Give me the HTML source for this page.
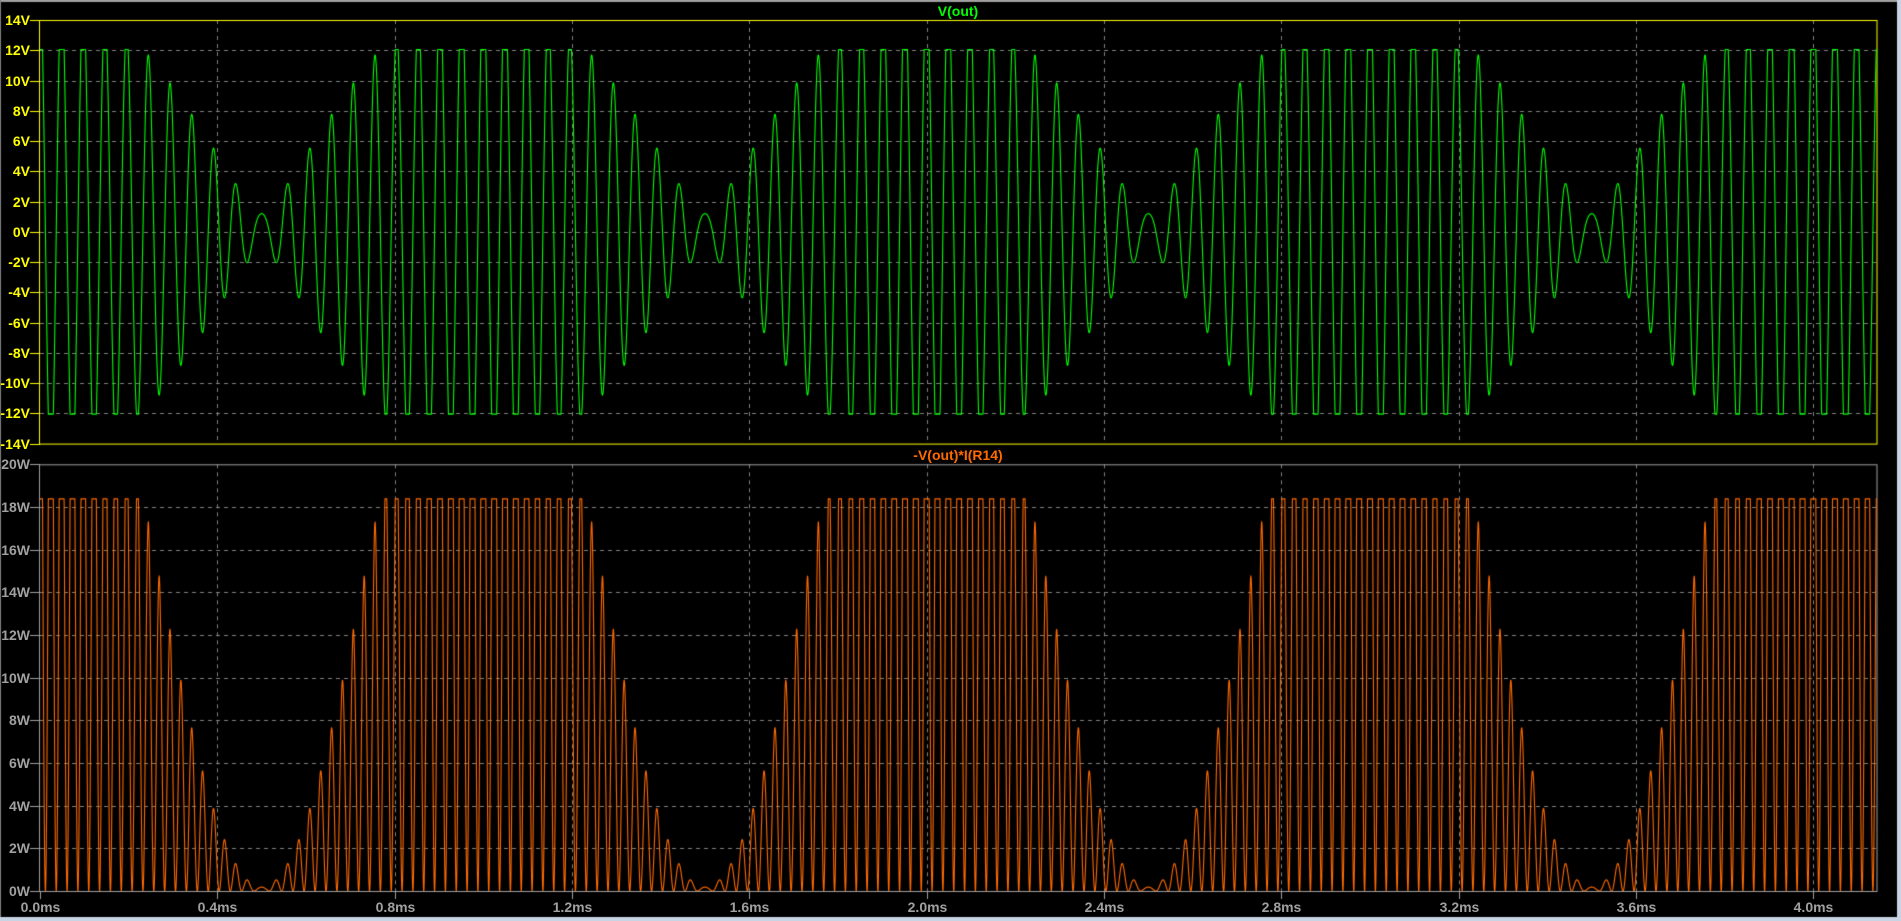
<!DOCTYPE html>
<html><head><meta charset="utf-8"><style>
html,body{margin:0;padding:0;background:#000;width:1901px;height:921px;overflow:hidden}
#w{position:relative;width:1901px;height:921px;background:#000}
.l{position:absolute;font:bold 14px "Liberation Sans",sans-serif;line-height:14px;white-space:nowrap}
.y{color:#ffff00;text-align:right;width:34px;left:-4px}
.g{color:#a0a0a0;text-align:right;width:34px;left:-4px}
.x{color:#a0a0a0;width:60px;text-align:center;top:900px}
canvas{position:absolute;left:0;top:0}
</style></head><body><div id="w">
<canvas id="c" width="1901" height="921"></canvas>
<div class="l" style="left:928px;top:4px;width:60px;text-align:center;color:#00ff00">V(out)</div>
<div class="l" style="left:898px;top:448px;width:120px;text-align:center;color:#ff6a00">-V(out)*I(R14)</div>
<div id="lab"></div>
</div>
<script>
var c=document.getElementById('c').getContext('2d');
var L=40,R=1877,T1=20,B1=443.6,T2=464.3,B2=891;
var pxms=443.33;
function X(t){return L+t*pxms;}
function Y1(v){return T1+(14-v)*(B1-T1)/28;}
function Y2(p){return B2-p*(B2-T2)/20;}
c.fillStyle='#a0a0a0';c.fillRect(0,0,1901,2);
c.fillStyle='#c8d4e4';c.fillRect(1897,0,4,921);c.fillRect(0,917,1901,4);
c.fillStyle='#808080';c.fillRect(0,0,1,917);
c.strokeStyle='#808080';c.lineWidth=1;c.setLineDash([4,4]);
c.beginPath();
for(var k=1;k<=10;k++){var x=Math.round(X(0.4*k))+0.5;if(x<R){c.moveTo(x,T1);c.lineTo(x,B1);c.moveTo(x,T2);c.lineTo(x,B2);}}
for(var v=-12;v<=12;v+=2){var y=Math.round(Y1(v))+0.5;c.moveTo(L,y);c.lineTo(R,y);}
for(var p=2;p<20;p+=2){var y=Math.round(Y2(p))+0.5;c.moveTo(L,y);c.lineTo(R,y);}
c.stroke();c.setLineDash([]);
var lab='';
for(var v=-14;v<=14;v+=2){var y=Math.round(Y1(v))+0.5;c.strokeStyle='#ffff00';c.beginPath();c.moveTo(30,y);c.lineTo(L,y);c.stroke();
lab+='<div class="l y" style="top:'+(y-7.5)+'px">'+v+'V</div>';}
for(var p=0;p<=20;p+=2){var y=Math.round(Y2(p))+0.5;c.strokeStyle='#a0a0a0';c.beginPath();c.moveTo(30,y);c.lineTo(L,y);c.stroke();
lab+='<div class="l g" style="top:'+(y-7.5)+'px">'+p+'W</div>';}
for(var k=0;k<=10;k++){var x=Math.round(X(0.4*k))+0.5;if(x>R)break;c.strokeStyle='#a0a0a0';c.beginPath();c.moveTo(x,B2);c.lineTo(x,B2+8);c.stroke();
lab+='<div class="l x" style="left:'+(x-30)+'px">'+(0.4*k).toFixed(1)+'ms</div>';}
document.getElementById('lab').innerHTML=lab;
c.strokeStyle='#ffff00';c.strokeRect(39.5,T1+0.5,R-39.5,B1-T1);
c.strokeStyle='#a0a0a0';c.strokeRect(39.5,T2+0.5,R-39.5,B2-T2);
function sig(t){var v=8.7*Math.cos(2*Math.PI*20*t)+7.5*Math.cos(2*Math.PI*21*t);return Math.max(-12.05,Math.min(12.05,v));}
var tmax=(R-L)/pxms,N=20000;
c.lineWidth=1.1;
c.save();c.beginPath();c.rect(L,T1,R-L,B1-T1);c.clip();
c.strokeStyle='#00ff00';c.beginPath();
for(var i=0;i<=N;i++){var t=tmax*i/N,v=sig(t);if(i)c.lineTo(X(t),Y1(v));else c.moveTo(X(t),Y1(v));}
c.stroke();c.restore();
c.save();c.beginPath();c.rect(L,T2,R-L,B2-T2);c.clip();
c.strokeStyle='#ff6a00';c.beginPath();
for(var i=0;i<=N;i++){var t=tmax*i/N,v=sig(t),p=v*v/7.9;if(i)c.lineTo(X(t),Y2(p));else c.moveTo(X(t),Y2(p));}
c.stroke();c.restore();
</script>
</body></html>
